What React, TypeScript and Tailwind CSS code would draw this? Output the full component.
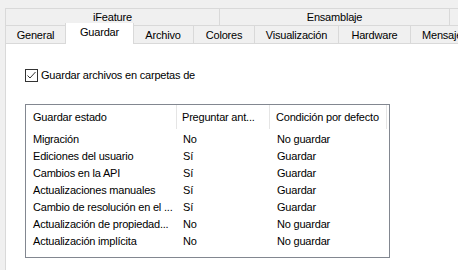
import React from "react";

const rows: [string, string, string][] = [
  ["Migración", "No", "No guardar"],
  ["Ediciones del usuario", "Sí", "Guardar"],
  ["Cambios en la API", "Sí", "Guardar"],
  ["Actualizaciones manuales", "Sí", "Guardar"],
  ["Cambio de resolución en el ...", "Sí", "Guardar"],
  ["Actualización de propiedad...", "No", "No guardar"],
  ["Actualización implícita", "No", "No guardar"],
];

const font = { fontFamily: '"Liberation Sans", Arial, sans-serif' };

export default function App() {
  return (
    <div
      className="w-[458px] h-[270px] bg-[#f0f0f0] overflow-hidden text-[11px] tracking-[-0.2px] text-black leading-none whitespace-nowrap"
      style={font}
    >
      <div className="pt-[8px] pl-[5px]">
        {/* top row */}
        <div className="flex h-[17px] border-t border-l border-[#d9d9d9]">
          <div className="w-[214px] shrink-0 border-r border-[#d9d9d9] flex items-center justify-center">iFeature</div>
          <div className="w-[230px] shrink-0 border-r border-[#d9d9d9] flex items-center justify-center">Ensamblaje</div>
          <div className="w-[40px] shrink-0"></div>
        </div>
        {/* second row */}
        <div className="flex h-[18px] items-end">
          <div className="w-[61px] shrink-0 h-[18px] border-t border-l border-r border-[#d9d9d9] flex items-center justify-center pt-[2px]">General</div>
          <div className="relative z-10 -ml-px w-[69px] shrink-0 h-[21px] -mb-px bg-white border-l border-r border-[#d9d9d9] flex items-center justify-center pb-[2px]">Guardar</div>
          <div className="-ml-px w-[61px] shrink-0 h-[18px] border-t border-r border-[#d9d9d9] flex items-center justify-center pt-[2px]">Archivo</div>
          <div className="w-[61px] shrink-0 h-[18px] border-t border-r border-[#d9d9d9] flex items-center justify-center pt-[2px]">Colores</div>
          <div className="w-[84px] shrink-0 h-[18px] border-t border-r border-[#d9d9d9] flex items-center justify-center pt-[2px]">Visualización</div>
          <div className="w-[72px] shrink-0 h-[18px] border-t border-r border-[#d9d9d9] flex items-center justify-center pt-[2px]">Hardware</div>
          <div className="w-[60px] shrink-0 h-[18px] border-t border-[#d9d9d9] flex items-center pl-[11px] pt-[2px] overflow-hidden">Mensaje</div>
        </div>
        {/* content */}
        <div className="bg-white border-t border-l border-[#d9d9d9] h-[240px] pl-[19px]">
          <div className="flex items-center h-[13px] mt-[25px]">
            <div className="w-[13px] h-[13px] border border-[#333333] bg-white flex items-center justify-center">
              <svg width="11" height="11" viewBox="0 0 11 11">
                <path d="M1.5 5.5 L4 8 L9.5 2" fill="none" stroke="#333" strokeWidth="1" />
              </svg>
            </div>
            <span className="ml-[3px]">Guardar archivos en carpetas de</span>
          </div>
          <div className="mt-[22px] w-[365px] h-[154px] border border-[#828790] bg-white">
            <div className="grid grid-cols-[151px_93px_117px_2px] h-[24px]">
              <div className="pl-[7px] pt-[1px] flex items-center border-r border-[#e5e5e5] overflow-hidden">Guardar estado</div>
              <div className="pl-[5px] pt-[1px] flex items-center border-r border-[#e5e5e5] overflow-hidden">Preguntar ant...</div>
              <div className="pl-[6px] pt-[1px] flex items-center border-r border-[#e5e5e5] overflow-hidden">Condición por defecto</div>
              <div></div>
            </div>
            {rows.map((r) => (
              <div key={r[0]} className="grid grid-cols-[151px_93px_117px] h-[17px] pt-[3px] items-center">
                <div className="pl-[7px] overflow-hidden">{r[0]}</div>
                <div className="pl-[6px]">{r[1]}</div>
                <div className="pl-[7px]">{r[2]}</div>
              </div>
            ))}
          </div>
        </div>
      </div>
    </div>
  );
}
